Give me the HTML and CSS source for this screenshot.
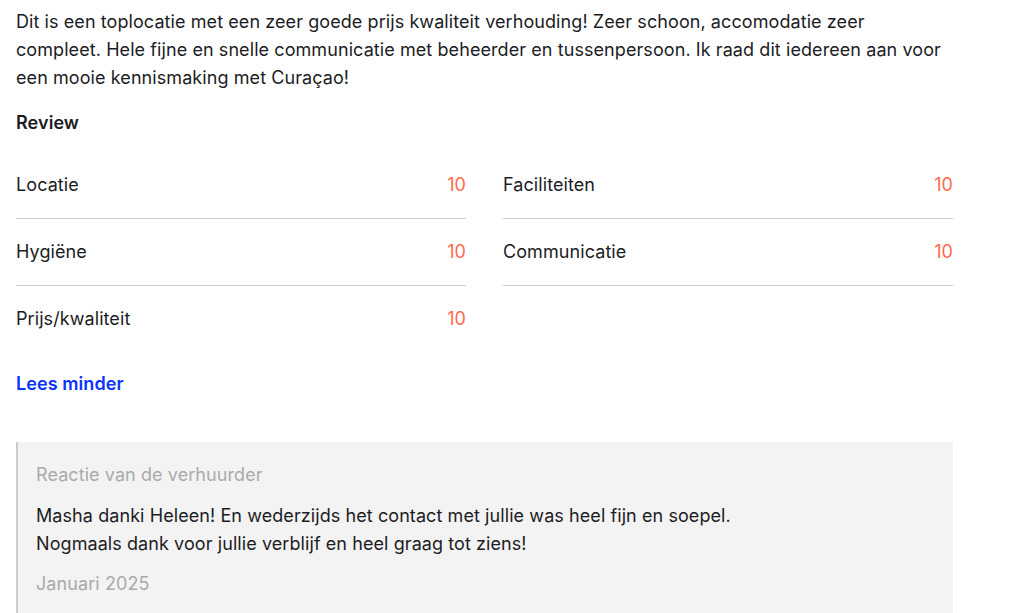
FILE: index.html
```html
<!DOCTYPE html>
<html lang="nl">
<head>
    <meta charset="UTF-8">
    <meta name="viewport" content="width=device-width, initial-scale=1.0">
    <title>Review</title>
    <link rel="stylesheet" href="styles.css">
</head>
<body>
    <div class="review">
        <p class="review-text">Dit is een toplocatie met een zeer goede prijs kwaliteit verhouding! Zeer schoon, accomodatie zeer compleet. Hele fijne en snelle communicatie met beheerder en tussenpersoon. Ik raad dit iedereen aan voor een mooie kennismaking met Curaçao!</p>

        <h3 class="review-title">Review</h3>

        <div class="scores">
            <div class="score-row">
                <span>Locatie</span>
                <span class="score">10</span>
            </div>
            <div class="score-row">
                <span>Faciliteiten</span>
                <span class="score">10</span>
            </div>
            <div class="score-row">
                <span>Hygiëne</span>
                <span class="score">10</span>
            </div>
            <div class="score-row">
                <span>Communicatie</span>
                <span class="score">10</span>
            </div>
            <div class="score-row last">
                <span>Prijs/kwaliteit</span>
                <span class="score">10</span>
            </div>
        </div>

        <a href="#" class="toggle">Lees minder</a>

        <div class="reply">
            <div class="reply-label">Reactie van de verhuurder</div>
            <p class="reply-text">Masha danki Heleen! En wederzijds het contact met jullie was heel fijn en soepel.<br>Nogmaals dank voor jullie verblijf en heel graag tot ziens!</p>
            <div class="reply-date">Januari 2025</div>
        </div>
    </div>
</body>
</html>
```

FILE: styles.css
```css
body {
    margin: 0;
    padding: 8px 16px 0;
    background-color: #fff;
    color: #1c1c24;
    font-family: Inter, "Liberation Sans", sans-serif;
    font-size: 18px;
    letter-spacing: 0.08px;
}

.review {
    width: 937px;
}

.review-text {
    margin: 0;
    line-height: 28px;
}

.review-title {
    margin: 19px 0 0;
    font-size: 18px;
    font-weight: 600;
    line-height: 24px;
}

.scores {
    display: grid;
    grid-template-columns: 1fr 1fr;
    column-gap: 37px;
    margin-top: 17px;
}

.score-row {
    display: flex;
    justify-content: space-between;
    padding: 20px 0;
    line-height: 26px;
    border-bottom: 1px solid #cfcfcf;
}

.score-row.last {
    border-bottom: none;
}

.score {
    color: #ff6a4d;
}

.toggle {
    display: inline-block;
    margin-top: 20px;
    color: #0a33ff;
    font-weight: 600;
    line-height: 24px;
    text-decoration: none;
}

.reply {
    margin-top: 46px;
    padding: 19px 18px 20px;
    background-color: #f3f3f3;
    border-left: 2px solid #cccccc;
}

.reply-label {
    color: #aaaaaa;
    line-height: 28px;
}

.reply-text {
    margin: 13px 0 0;
    line-height: 28px;
}

.reply-date {
    margin-top: 12px;
    color: #aaaaaa;
    line-height: 28px;
}
```
